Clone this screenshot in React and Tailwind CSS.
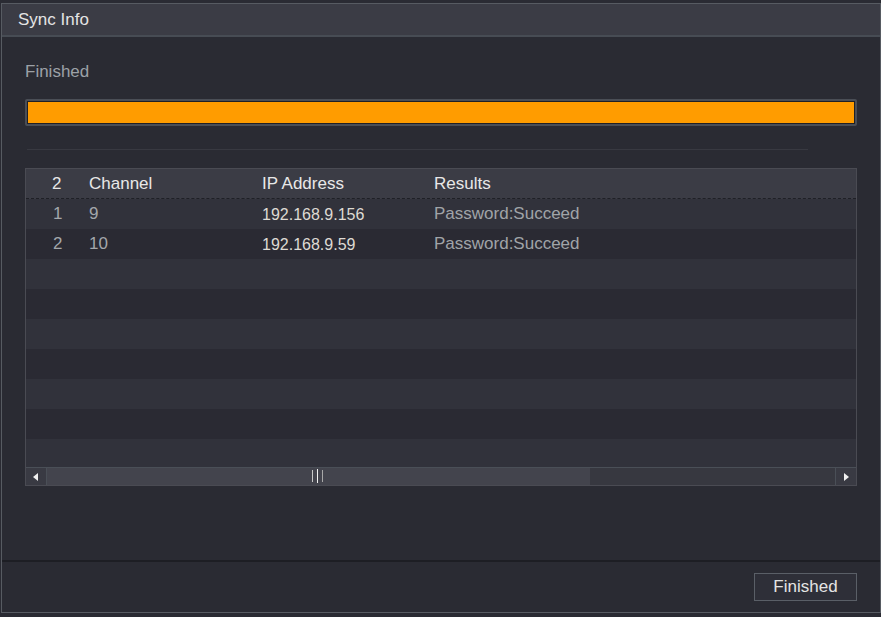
import React from "react";

const rows = [
  { no: 1, channel: "9", ip: "192.168.9.156", result: "Password:Succeed" },
  { no: 2, channel: "10", ip: "192.168.9.59", result: "Password:Succeed" },
];

function ScrollBar() {
  return (
    <div className="flex h-[18px] border-t border-[#4a4f57] bg-[#3a3b44]">
      <div className="flex w-[21px] items-center justify-center border-r border-[#4a4f57] bg-[#393a43]">
        <svg width="6" height="8" viewBox="0 0 6 8">
          <path d="M5 0 L0 4 L5 8 Z" fill="#f0f0f0" />
        </svg>
      </div>
      <div className="relative flex w-[543px] items-center bg-[#43444d]">
        <div className="absolute left-[265px] top-[2px] flex gap-[4px]">
          <span className="h-[12px] w-px bg-[#c8c8c8]" />
          <span className="h-[14px] w-px -mt-[1px] bg-[#f0f0f0]" />
          <span className="h-[12px] w-px bg-[#a8a8a8]" />
        </div>
      </div>
      <div className="flex-1 bg-[#373840]" />
      <div className="flex w-[21px] items-center justify-center border-l border-[#4a4f57] bg-[#393a43]">
        <svg width="6" height="8" viewBox="0 0 6 8">
          <path d="M1 0 L6 4 L1 8 Z" fill="#f0f0f0" />
        </svg>
      </div>
    </div>
  );
}

export default function App() {
  const filler = Array.from({ length: 7 });
  return (
    <div
      className="h-[617px] w-[881px] overflow-hidden bg-[#2a2b33] pt-[3px] pl-px"
      style={{ fontFamily: '"Liberation Sans", Arial, sans-serif' }}
    >
      <div className="flex h-[610px] flex-col border border-[#575b62] bg-[#2a2b33]">
        <div className="flex h-[33px] items-center border-b-2 border-[#474c54] bg-[#3b3c45] pl-[16px] text-[17px] text-[#e4e4e4]">
          Sync Info
        </div>

        <div className="flex flex-1 flex-col px-[23px]">
          <div className="mt-[25px] h-[20px] text-[17px] leading-[20px] text-[#9ca1a7]">Finished</div>

          <div className="mt-[17px] h-[27px] rounded-[2px] border-2 border-[#4a4e56] bg-[#1f2026] p-px">
            <div className="h-full w-full bg-[#ff9c00]" />
          </div>

          <div className="mt-[23px] mr-[49px] ml-[2px] h-px bg-[#383941]" />

          <div className="mt-[18px] flex h-[318px] flex-col border border-[#4a4b53]">
            <div className="flex h-[30px] items-center border-b border-dashed border-[#1f2026] bg-[#3b3c45] text-[17px] text-[#e8e8e8]">
              <div className="w-[63px] pl-[26px]">2</div>
              <div className="w-[173px]">Channel</div>
              <div className="w-[172px]">IP Address</div>
              <div className="flex-1">Results</div>
            </div>
            <div className="flex-1 overflow-hidden">
              {rows.map((r, i) => (
                <div
                  key={r.no}
                  className={
                    "flex h-[30px] items-center text-[17px] " +
                    (i % 2 === 0 ? "bg-[#31323b]" : "bg-[#2a2a33]")
                  }
                >
                  <div className="w-[63px] pl-[27px] text-[#a3a7ab]">{r.no}</div>
                  <div className="w-[173px] text-[#a3a7ab]">{r.channel}</div>
                  <div className="w-[172px] pt-[2px] text-[16px] text-[#dedad3]">{r.ip}</div>
                  <div className="flex-1 text-[#a0a4a8]">{r.result}</div>
                </div>
              ))}
              {filler.map((_, i) => (
                <div
                  key={i}
                  className={"h-[30px] " + (i % 2 === 0 ? "bg-[#31323b]" : "bg-[#2a2a33]")}
                />
              ))}
            </div>
            <ScrollBar />
          </div>
        </div>

        <div className="flex h-[52px] items-start justify-end border-t-2 border-[#1d1e24] pt-[11px] pr-[23px]">
          <button className="h-[28px] w-[103px] border border-[#5a5f67] bg-[#2e2f38] text-[17px] text-[#e4e4e4]">
            Finished
          </button>
        </div>
      </div>
    </div>
  );
}
